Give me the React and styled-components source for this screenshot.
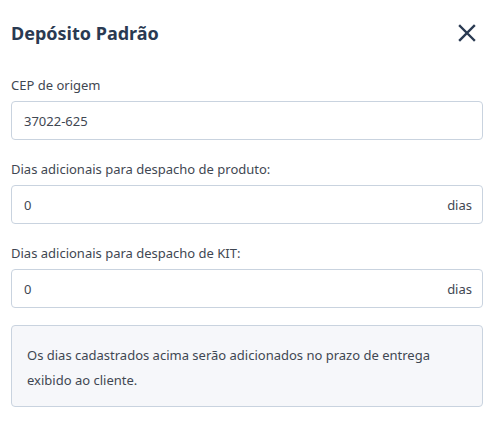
import React from "react";
import styled, { createGlobalStyle } from "styled-components";

const GlobalStyle = createGlobalStyle`
    body {
        margin: 0;
        background: #ffffff;
        font-family: "Noto Sans", "Open Sans", sans-serif;
        color: #2d3748;
    }
`;

const Modal = styled.div`
    width: 500px;
    box-sizing: border-box;
    padding: 0 17px 0 11px;
`;

const Header = styled.div`
    display: flex;
    justify-content: space-between;
    align-items: center;
    height: 66px;
    margin-bottom: 10px;
`;

const Title = styled.h2`
    margin: 0;
    font-size: 18px;
    font-weight: 700;
    color: #2a3a52;
`;

const CloseButton = styled.button`
    border: 0;
    background: none;
    padding: 0;
    margin-right: 7px;
    display: flex;
    cursor: pointer;
    color: #2a3a52;
`;

const Field = styled.div`
    display: flex;
    flex-direction: column;
    gap: 7px;
    margin-bottom: 20px;
`;

const Label = styled.label`
    font-size: 13px;
    color: #3f4752;
    line-height: 18px;
`;

const InputBox = styled.div`
    display: flex;
    align-items: center;
    height: 39px;
    box-sizing: border-box;
    border: 1px solid #c9d3df;
    border-radius: 4px;
    padding: 0 12px;
`;

const Input = styled.input`
    flex: 1;
    border: 0;
    outline: none;
    font-family: inherit;
    font-size: 13px;
    color: #3f4752;
    padding: 0;
    background: transparent;
`;

const Suffix = styled.span`
    font-size: 13px;
    color: #3f4752;
    margin-right: -2px;
`;

const Notice = styled.div`
    background: #f6f7fa;
    border: 1px solid #c9d3df;
    border-radius: 4px;
    padding: 17px 15px 13px;
    font-size: 13px;
    line-height: 25px;
    color: #3f4752;
    margin-top: -3px;
`;

const XIcon = () => (
    <svg width="18" height="18" viewBox="0 0 18 18" fill="none">
        <path d="M2 2L16 16M16 2L2 16" stroke="currentColor" strokeWidth="2.4" strokeLinecap="square" />
    </svg>
);

const App = () => {
    return (
        <>
            <GlobalStyle />
            <Modal>
                <Header>
                    <Title>Depósito Padrão</Title>
                    <CloseButton aria-label="Fechar">
                        <XIcon />
                    </CloseButton>
                </Header>
                <Field>
                    <Label>CEP de origem</Label>
                    <InputBox>
                        <Input defaultValue="37022-625" />
                    </InputBox>
                </Field>
                <Field>
                    <Label>Dias adicionais para despacho de produto:</Label>
                    <InputBox>
                        <Input defaultValue="0" />
                        <Suffix>dias</Suffix>
                    </InputBox>
                </Field>
                <Field>
                    <Label>Dias adicionais para despacho de KIT:</Label>
                    <InputBox>
                        <Input defaultValue="0" />
                        <Suffix>dias</Suffix>
                    </InputBox>
                </Field>
                <Notice>
                    Os dias cadastrados acima serão adicionados no prazo de entrega exibido ao cliente.
                </Notice>
            </Modal>
        </>
    );
};

export default App;
